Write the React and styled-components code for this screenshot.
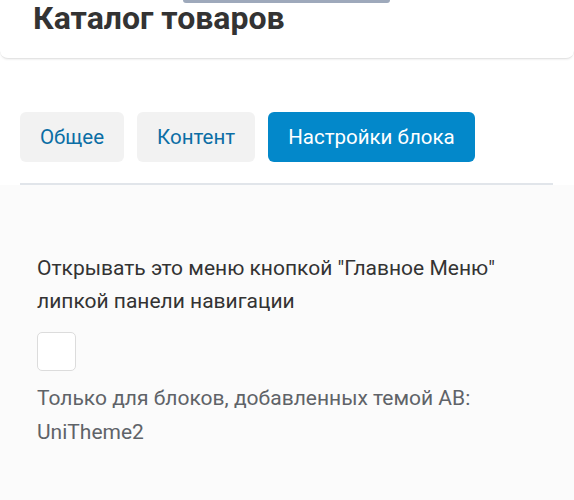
import React from "react";
import styled, { createGlobalStyle } from "styled-components";

const Global = createGlobalStyle`
  html, body { margin: 0; padding: 0; background: #ffffff; }
  body { font-family: Roboto, "Noto Sans", Arial, sans-serif; }
  * { box-sizing: border-box; }
`;

const Page = styled.div`
  width: 574px;
  height: 500px;
  overflow: hidden;
  background: #ffffff;
`;

const Header = styled.header`
  position: relative;
  height: 59px;
  background: #ffffff;
  border-bottom: 1px solid #e4e4e4;
  border-radius: 0 0 8px 8px;
  box-shadow: 0 1px 2px rgba(0, 0, 0, 0.06);
  padding: 0 0 0 33px;
`;

const Handle = styled.div`
  position: absolute;
  top: 0;
  left: 183px;
  width: 207px;
  height: 3px;
  background: #9ea9bb;
  border-radius: 0 0 6px 6px;
`;

const Title = styled.h1`
  margin: 0;
  padding-top: 2px;
  font-size: 32px;
  line-height: 32px;
  font-weight: 700;
  color: #333333;
`;

const Body = styled.div`
  padding: 53px 20px 0 20px;
`;

const Tabs = styled.nav`
  display: flex;
  gap: 13px;
  padding-bottom: 21px;
  border-bottom: 2px solid #e1e5ea;
  margin-right: 1px;
`;

const Tab = styled.button`
  height: 50px;
  padding: 0 20px;
  border: none;
  border-radius: 6px;
  font-family: Roboto, Arial, sans-serif;
  font-size: 20.5px;
  background: ${(p) => (p.$active ? "#0388ca" : "#f2f2f2")};
  color: ${(p) => (p.$active ? "#ffffff" : "#0b6ea5")};
`;

const Panel = styled.section`
  background: #fbfbfb;
  padding: 67px 0 0 37px;
  height: 320px;
`;

const Label = styled.p`
  margin: 0;
  font-size: 21px;
  line-height: 33px;
  color: #333333;
`;

const Check = styled.div`
  width: 39px;
  height: 39px;
  margin: 14px 0 10px;
  border: 1px solid #dcdcdc;
  border-radius: 5px;
  background: #ffffff;
`;

const Help = styled.p`
  margin: 0;
  font-size: 21px;
  line-height: 34px;
  color: #5f6368;
`;

export default function App() {
  return (
    <Page>
      <Global />
      <Header>
        <Handle />
        <Title>Каталог товаров</Title>
      </Header>
      <Body>
        <Tabs>
          <Tab>Общее</Tab>
          <Tab>Контент</Tab>
          <Tab $active>Настройки блока</Tab>
        </Tabs>
      </Body>
      <Panel>
        <Label>
          Открывать это меню кнопкой "Главное Меню"
          <br />
          липкой панели навигации
        </Label>
        <Check />
        <Help>
          Только для блоков, добавленных темой AB:
          <br />
          UniTheme2
        </Help>
      </Panel>
    </Page>
  );
}
